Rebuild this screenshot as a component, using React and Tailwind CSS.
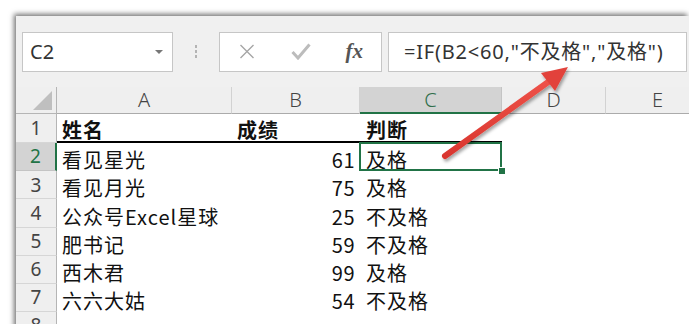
import React from 'react';

const data = [
  ['姓名', '成绩', '判断'],
  ['看见星光', '61', '及格'],
  ['看见月光', '75', '及格'],
  ['公众号Excel星球', '25', '不及格'],
  ['肥书记', '59', '不及格'],
  ['西木君', '99', '及格'],
  ['六六大姑', '54', '不及格'],
  ['', '', ''],
];

const heights = ['h-[29px]', 'h-[28.2px]', 'h-[28.2px]', 'h-[28.2px]', 'h-[28.2px]', 'h-[28.2px]', 'h-[28.2px]', 'h-[28px]'];

const uiFont = { fontFamily: '"Noto Sans", "Noto Sans CJK SC", sans-serif' };
const cellFont = { fontFamily: '"Noto Sans CJK SC", "Noto Sans", sans-serif' };

const App = () => {
  return (
    <div className="relative w-[689px] h-[324px] overflow-hidden bg-white pt-[16px] pl-[16px]">
      {/* Excel window */}
      <div className="w-[673px] h-[330px] bg-[#f0f0f0] shadow-[-2px_-2px_5px_rgba(0,0,0,0.55)]">
        {/* Formula bar */}
        <div className="h-[71px] flex items-center pl-[6px] pr-[2px]" style={uiFont}>
          <div className="w-[151px] h-[40px] bg-white border border-[#c6c6c6] flex items-center justify-between pl-[7px] pr-[9px]">
            <span className="text-[20px] text-[#333] leading-none">C2</span>
            <span className="w-0 h-0 border-l-[4px] border-r-[4px] border-t-[4px] border-l-transparent border-r-transparent border-t-[#777]"></span>
          </div>
          <div className="w-[46px] flex flex-col items-center gap-[2px]">
            <span className="w-[2px] h-[3px] bg-[#b4b4b4]"></span>
            <span className="w-[2px] h-[3px] bg-[#b4b4b4]"></span>
            <span className="w-[2px] h-[3px] bg-[#b4b4b4]"></span>
          </div>
          <div className="w-[163px] h-[40px] bg-white border border-[#c6c6c6] flex items-center">
            <div className="w-[54px] flex justify-center">
              <svg width="16" height="15" viewBox="0 0 16 15">
                <path d="M1.5 1 L14.5 14 M14.5 1 L1.5 14" stroke="#a6a6a6" strokeWidth="1.4" fill="none" />
              </svg>
            </div>
            <div className="w-[54px] flex justify-center">
              <svg width="20" height="17" viewBox="0 0 20 17">
                <path d="M1.5 9 L7 15 L18.5 1.5" stroke="#bcbcbc" strokeWidth="3" fill="none" />
              </svg>
            </div>
            <div className="w-[54px] flex justify-center">
              <span className="text-[21px] italic font-bold text-[#555] leading-none" style={{ fontFamily: '"Liberation Serif", serif' }}>fx</span>
            </div>
          </div>
          <div className="ml-[6px] flex-1 h-[40px] bg-white border border-[#c6c6c6] flex items-center pl-[15px]">
            <span className="text-[20px] text-[#333] leading-none tracking-[0.8px]">=IF(B2&lt;60,"不及格","及格")</span>
          </div>
        </div>

        {/* Sheet */}
        <div className="grid grid-cols-[41px_175px_128px_142px_104px_104px] bg-white" style={uiFont}>
          {/* Column headers */}
          <div className="h-[27px] bg-[#efefef] border-r border-b border-[#b5b5b5] flex items-end justify-end pr-[4px] pb-[3px]">
            <svg width="19" height="19" viewBox="0 0 19 19">
              <polygon points="19,0 19,19 0,19" fill="#bfbfbf" />
            </svg>
          </div>
          {['A', 'B', 'C', 'D', 'E'].map((c) => (
            <div
              key={c}
              className={
                c === 'C'
                  ? 'h-[27px] bg-[#d3d3d3] border-r border-r-[#c4c4c4] border-b-2 border-b-[#217346] flex items-center justify-center text-[20px] font-light text-[#2f6e4a]'
                  : 'h-[27px] bg-[#efefef] border-r border-r-[#d2d2d2] border-b border-b-[#ababab] flex items-center justify-center text-[20px] font-light text-[#444]'
              }
            >
              {c}
            </div>
          ))}

          {data.map((row, i) => (
            <React.Fragment key={i}>
              <div
                className={
                  i === 1
                    ? `${heights[i]} bg-[#d3d3d3] border-b border-b-[#c4c4c4] border-r-2 border-r-[#217346] flex items-center justify-center text-[19px] text-[#217346]`
                    : `${heights[i]} bg-[#efefef] border-b border-b-[#d6d6d6] border-r border-r-[#b5b5b5] flex items-center justify-center text-[19px] text-[#444]`
                }
              >
                {i + 1}
              </div>
              <div
                className={`${heights[i]} flex items-end pl-[5px] pb-[1px] text-[20px] leading-none tracking-[1px] text-[#111] ${i === 0 ? 'font-bold border-b-2 border-black' : ''}`}
                style={cellFont}
              >
                {row[0]}
              </div>
              <div
                className={`${heights[i]} flex items-end pb-[1px] text-[20px] leading-none text-[#111] ${i === 0 ? 'justify-start pl-[5px] tracking-[1px] font-bold border-b-2 border-black' : 'justify-end pr-[5px] tracking-[0.5px]'}`}
                style={cellFont}
              >
                {row[1]}
              </div>
              <div
                className={`${heights[i]} relative flex items-end pl-[6px] pb-[1px] text-[20px] leading-none tracking-[1px] text-[#111] ${i === 0 ? 'font-bold border-b-2 border-black' : ''}`}
                style={cellFont}
              >
                {row[2]}
                {i === 1 && (
                  <>
                    <div className="absolute -top-[1px] -left-[1px] right-0 bottom-0 border-2 border-[#217346]"></div>
                    <div className="absolute -right-[4px] -bottom-[4px] w-[8px] h-[8px] bg-[#217346] border border-white"></div>
                  </>
                )}
              </div>
              <div className={heights[i]}></div>
              <div className={heights[i]}></div>
            </React.Fragment>
          ))}
        </div>
      </div>

      {/* Red annotation arrow */}
      <svg className="absolute inset-0 pointer-events-none" width="689" height="324" viewBox="0 0 689 324">
        <defs>
          <filter id="arrowShadow" x="-20%" y="-20%" width="140%" height="140%">
            <feDropShadow dx="1.5" dy="2.5" stdDeviation="1.8" floodColor="#000" floodOpacity="0.35" />
          </filter>
          <linearGradient id="arrowFill" x1="0" y1="0" x2="0" y2="1">
            <stop offset="0" stopColor="#ee5249" />
            <stop offset="1" stopColor="#d9362f" />
          </linearGradient>
        </defs>
        <g filter="url(#arrowShadow)">
          <line x1="445" y1="156" x2="551" y2="80" stroke="url(#arrowFill)" strokeWidth="6" strokeLinecap="round" />
          <polygon points="568,67 555,91 541,73" fill="#e2433b" />
        </g>
      </svg>
    </div>
  );
};

export default App;
